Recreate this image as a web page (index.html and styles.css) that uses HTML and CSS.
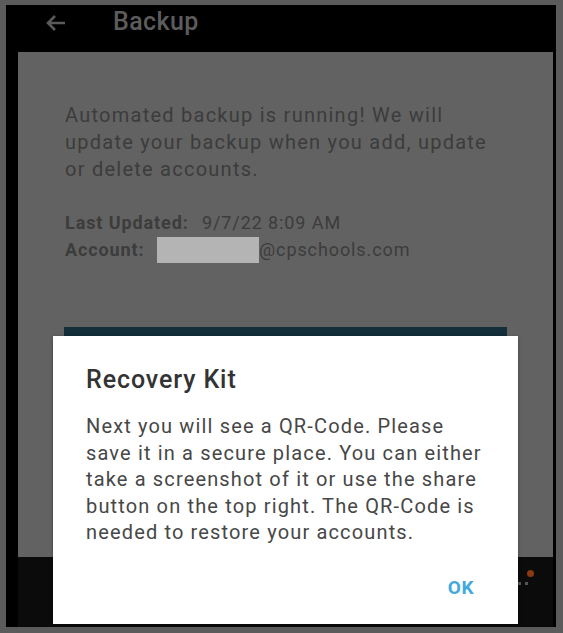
FILE: index.html
```html
<!DOCTYPE html>
<html>
<head>
<meta charset="utf-8">
<link rel="stylesheet" href="styles.css">
</head>
<body>
<div class="frame">
  <div class="screen">
    <header class="appbar">
      <svg class="back" width="22" height="18" viewBox="0 0 22 18"><path d="M20 9H3M10 2L3 9l7 7" fill="none" stroke="#5a5a5a" stroke-width="2.6"/></svg>
      <span class="title">Backup</span>
    </header>
    <main class="card">
      <p class="intro">Automated backup is running! We will update your backup when you add, update or delete accounts.</p>
      <div class="meta">
        <div class="row"><span class="label">Last Updated:</span><span class="val">9/7/22 8:09 AM</span></div>
        <div class="row"><span class="label acc">Account:</span><span class="redact"></span><span class="val2">@cpschools.com</span></div>
      </div>
      <div class="tealbar"></div>
    </main>
    <footer class="nav">
      <span class="dot"></span>
      <span class="dots"><i></i><i></i></span>
    </footer>
  </div>
  <div class="dialog">
    <h2 class="dtitle">Recovery Kit</h2>
    <p class="dbody">Next you will see a QR-Code. Please<br>save it in a secure place. You can either<br>take a screenshot of it or use the share<br>button on the top right. The QR-Code is<br>needed to restore your accounts.</p>
    <div class="actions"><span class="ok">OK</span></div>
  </div>
</div>
</body>
</html>
```
FILE: styles.css
```css
* { box-sizing: border-box; }
html, body { margin: 0; padding: 0; }
body {
  width: 563px;
  height: 633px;
  background: #5b5b5b;
  font-family: Roboto, "Noto Sans", sans-serif;
  overflow: hidden;
}
.frame {
  position: relative;
  width: 563px;
  height: 633px;
  padding: 5px 7px 6px 6px;
}
.screen {
  width: 550px;
  height: 622px;
  background: #000;
  display: flex;
  flex-direction: column;
}
.appbar {
  height: 47px;
  display: flex;
  align-items: center;
  padding-left: 39px;
  padding-bottom: 14px;
}
.back { margin-right: 46px; margin-top: 2px; }
.title {
  color: #5c5c5c;
  font-size: 25px;
  font-weight: 500;
  letter-spacing: 0.4px;
}
.card {
  flex: 1;
  margin: 0 3px 0 12px;
  background: #626262;
  padding: 50px 0 0 47px;
  color: #3c3c3c;
  display: flex;
  flex-direction: column;
}
.intro {
  margin: 0;
  font-size: 20px;
  line-height: 27px;
  letter-spacing: 1.25px;
  width: 440px;
}
.meta {
  margin-top: 26px;
  font-size: 18px;
  line-height: 27px;
  letter-spacing: 0.9px;
}
.row { display: flex; align-items: center; }
.label { font-weight: 700; width: 137px; }
.label.acc { width: 92px; }
.redact {
  width: 102px;
  height: 26px;
  background: #b4b4b4;
}
.tealbar {
  margin-top: 64px;
  width: 443px;
  margin-left: -1px;
  height: 12px;
  background: #142e3a;
}
.nav {
  height: 70px;
  margin: 0 3px 0 12px;
  background: #0b0b0b;
  position: relative;
}
.dot {
  position: absolute;
  left: 509px;
  top: 13px;
  width: 7px;
  height: 7px;
  border-radius: 50%;
  background: #8a3a10;
}
.dots {
  position: absolute;
  left: 500px;
  top: 25px;
  display: flex;
  gap: 4px;
}
.dots i {
  width: 3px;
  height: 3px;
  background: #555;
}
.dialog {
  position: absolute;
  left: 53px;
  top: 336px;
  width: 465px;
  height: 288px;
  background: #fff;
  padding: 28px 20px 0 33px;
  box-shadow: 0 1px 3px rgba(0,0,0,0.4);
}
.dtitle {
  margin: 0;
  font-size: 25px;
  font-weight: 500;
  color: #333;
  line-height: 32px;
  letter-spacing: 0.9px;
}
.dbody {
  margin: 17px 0 0 0;
  font-size: 20px;
  line-height: 26.5px;
  letter-spacing: 1.15px;
  color: #474747;
  white-space: nowrap;
}
.actions {
  display: flex;
  justify-content: flex-end;
  padding-right: 24px;
  margin-top: 30px;
}
.ok {
  color: #41a9dc;
  font-weight: 700;
  font-size: 19px;
  letter-spacing: 0.5px;
}
```
